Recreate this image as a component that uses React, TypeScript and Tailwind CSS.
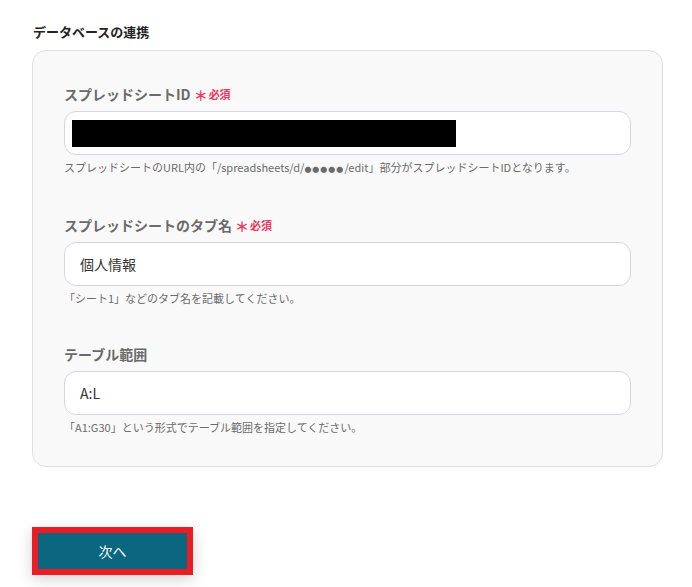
const font = { fontFamily: '"Noto Sans CJK JP", "Noto Sans", sans-serif' };

interface FieldProps {
  label: string;
  required?: boolean;
  help: React.ReactNode;
  children: React.ReactNode;
}

function Field({ label, required, help, children }: FieldProps) {
  return (
    <div>
      <div className="flex items-center h-5">
        <span className="text-[14px] font-bold text-[#6b6b6b] leading-5">{label}</span>
        {required && (
          <span className="ml-[3px] flex items-center text-[11px] font-bold text-[#f0365d] leading-5">
            <span className="text-[14px] mr-[1px] leading-none translate-y-[1px]">＊</span>必須
          </span>
        )}
      </div>
      <div className="mt-[7px] h-[44px] w-full rounded-[12px] border border-[#d5d7dc] bg-white flex items-center px-[15px]">
        {children}
      </div>
      <p className="mt-[4px] text-[11px] leading-4 text-[#6b6b6b]">{help}</p>
    </div>
  );
}

export default function App() {
  return (
    <div className="w-[692px] h-[587px] bg-white overflow-hidden" style={font}>
      <div className="pt-[22px] pl-[33px]">
        <h2 className="text-[13px] font-bold text-[#222] leading-5">データベースの連携</h2>
      </div>
      <div className="mt-[8px] ml-[32px] w-[631px] rounded-[14px] border border-[#dddfe3] bg-[#f9f9f9] px-[31px] pt-[33px] pb-[31px] flex flex-col gap-[38px]">
        <Field
          label="スプレッドシートID"
          required
          help={
            <>
              スプレッドシートのURL内の「/spreadsheets/d/
              <span className="text-[7px] tracking-[1px] align-middle">●●●●●</span>
              /edit」部分がスプレッドシートIDとなります。
            </>
          }
        >
          <div className="-ml-[8px] h-[27px] w-[384px] bg-black" />
        </Field>
        <Field label="スプレッドシートのタブ名" required help="「シート1」などのタブ名を記載してください。">
          <span className="text-[14px] text-[#333]">個人情報</span>
        </Field>
        <Field label="テーブル範囲" help="「A1:G30」という形式でテーブル範囲を指定してください。">
          <span className="text-[14px] text-[#333]">A:L</span>
        </Field>
      </div>
      <div className="mt-[60px] ml-[32px]">
        <button className="w-[161px] h-[48px] border-[6px] border-[#ea1c24] bg-[#0b6780] text-white text-[14px] shadow-[0_4px_14px_rgba(0,0,0,0.18)]">
          次へ
        </button>
      </div>
    </div>
  );
}
